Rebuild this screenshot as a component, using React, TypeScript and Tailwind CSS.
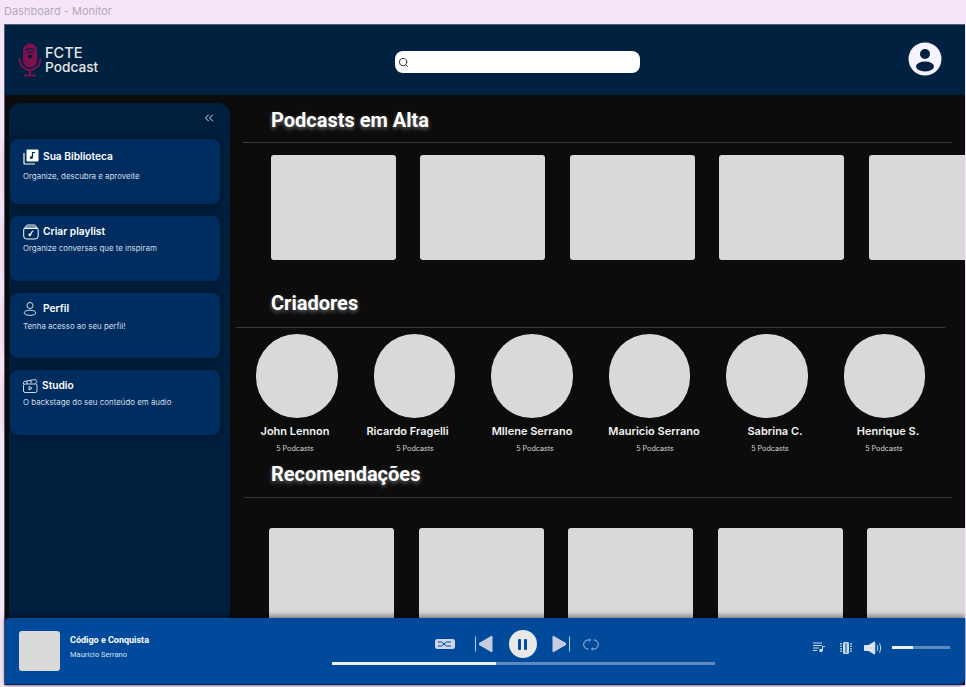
import { ChevronsLeft, Search } from "lucide-react";

const creators = [
  { name: "John Lennon", nameW: "w-[118px]", subW: "w-[118px]" },
  { name: "Ricardo Fragelli", nameW: "w-[107px]", subW: "w-[122px]" },
  { name: "MIlene Serrano", nameW: "w-[142px]", subW: "w-[118px]" },
  { name: "Mauricio Serrano", nameW: "w-[102px]", subW: "w-[122px]" },
  { name: "Sabrina C.", nameW: "w-[140px]", subW: "w-[108px]" },
  { name: "Henrique S.", nameW: "w-[86px]", subW: "w-[120px]" },
];

function MicLogo() {
  return (
    <svg width="24" height="34" viewBox="0 0 24 34" fill="none">
      <rect x="5" y="0.5" width="14" height="24" rx="7" fill="#7d1150" />
      <path d="M1.5 15.5c0 6.5 4.5 11.5 10.5 11.5s10.5-5 10.5-11.5" stroke="#7d1150" strokeWidth="2" />
      <path d="M12 27v5M6 32.5h12" stroke="#7d1150" strokeWidth="2" />
      <path d="M7.5 7.5c2.5-2.5 6.500-2.500 9 0M9.300 10.200c1.500-1.400 3.900-1.400 5.400 0" stroke="#001f3f" strokeWidth="1.200" />
      <circle cx="12" cy="13.500" r="2" fill="#001f3f" />
    </svg>
  );
}

function LibraryIcon() {
  return (
    <svg width="16" height="16" viewBox="0 0 16 16" fill="none">
      <path d="M1 4v10.500a.5.5 0 0 0 .5.5H12" stroke="white" strokeWidth="1.200" />
      <rect x="3.500" y="0.500" width="12" height="12" rx="1" fill="white" />
      <path d="M9.500 8.500V3.500h2.500" stroke="#002d5f" strokeWidth="1.200" />
      <circle cx="8.300" cy="8.600" r="1.500" fill="#002d5f" />
    </svg>
  );
}

function PlaylistIcon() {
  return (
    <svg width="16" height="16" viewBox="0 0 16 16" fill="none" stroke="white" strokeWidth="1">
      <rect x="0.700" y="3" width="14.500" height="12" rx="3" />
      <path d="M3 3c0-1 .5-2 1.500-2h7c1 0 1.500 1 1.500 2" />
      <path d="M2 4.500h12" />
      <path d="M9.500 7 7.500 10.500" strokeWidth="1.200" />
      <circle cx="6.800" cy="10.800" r="1" fill="white" />
      <path d="M9.500 7h1" strokeWidth="1.200" />
    </svg>
  );
}

function ProfileIcon() {
  return (
    <svg width="14" height="14" viewBox="0 0 14 14" fill="none" stroke="#e8eef6" strokeWidth="0.900">
      <circle cx="7" cy="3.500" r="3" />
      <ellipse cx="7" cy="10.800" rx="5.800" ry="2.600" />
    </svg>
  );
}

function StudioIcon() {
  return (
    <svg width="15" height="14" viewBox="0 0 15 14" fill="none" stroke="#e8eef6" strokeWidth="0.900">
      <rect x="0.500" y="5" width="13.500" height="8.500" rx="1.500" />
      <path d="M.5 5V3.500a1 1 0 0 1 .800-1l9.500-1.800c1.500-.3 3 .5 3 2 0 1-.800 1.500-1.800 1.800" />
      <path d="M4 2v3M8 1.200v3" />
      <path d="M6 7.500v3.500l3-1.700z" />
    </svg>
  );
}

function SidebarCard({
  icon,
  title,
  text,
  gap,
  top,
  descTop,
}: {
  icon: React.ReactNode;
  title: string;
  text: string;
  gap: string;
  top: string;
  descTop: string;
}) {
  return (
    <div className={`ml-px h-[65px] w-[210px] rounded-lg bg-[#002d5f] pl-[13px] shadow-[0_0_8px_4px_rgba(0,0,0,0.18)] ${top}`}>
      <div className={`flex h-4 items-center ${gap}`}>
        {icon}
        <span className="text-[10.200px] font-semibold text-white">{title}</span>
      </div>
      <p className={`text-[7.900px] leading-3 text-[#d3deea] ${descTop}`}>{text}</p>
    </div>
  );
}

function SectionTitle({ children }: { children: React.ReactNode }) {
  return (
    <h2 className="ml-[41px] h-[26px] font-['Roboto',sans-serif] text-[20px] leading-[26px] font-bold text-white [text-shadow:0_2px_4px_rgba(255,255,255,0.4)]">
      {children}
    </h2>
  );
}

function CoverRow({ className }: { className: string }) {
  return (
    <div className={`flex gap-[24.500px] ${className}`}>
      {[0, 1, 2, 3, 4].map((i) => (
        <div key={i} className="h-[105px] w-[125px] shrink-0 rounded-[3px] bg-[#d9d9d9]" />
      ))}
    </div>
  );
}

export default function App() {
  return (
    <div className="flex h-[687px] w-[966px] flex-col overflow-hidden bg-[#f5e6f7] font-['Inter',sans-serif]">
      <div className="h-6 pl-1 pt-[3px] text-[11px] leading-4 text-[#b5a9ba]">Dashboard - Monitor</div>

      <div className="ml-1 flex h-[661px] w-[961px] flex-col border-t border-l border-[#565b78] bg-[#0c0c0c]">
        <header className="flex h-[70px] shrink-0 items-center bg-[#002140]">
          <div className="ml-[13px] flex items-center gap-[3px] pb-px">
            <MicLogo />
            <div className="mt-px text-[#e6e6e6]">
              <div className="text-[14.500px] leading-[14px] font-medium">FCTE</div>
              <div className="text-[13.700px] leading-[14px] font-medium">Podcast</div>
            </div>
          </div>
          <div className="mt-1 ml-[297px] flex h-[22px] w-[245px] items-center rounded-lg bg-white pl-[3px]">
            <Search size={11} strokeWidth={2} className="text-[#2a2a3a]" />
          </div>
          <svg width="34" height="34" viewBox="0 0 34 34" className="mb-[2px] ml-[268px]">
            <circle cx="17" cy="17" r="16.500" fill="#f6f3ff" />
            <circle cx="17" cy="12" r="5" fill="#002140" />
            <ellipse cx="17" cy="24.500" rx="9" ry="5" fill="#002140" />
          </svg>
        </header>

        <div className="flex min-h-0 flex-1">
          <aside className="mt-2 ml-1 flex w-[221px] shrink-0 flex-col gap-3 rounded-t-xl bg-[#001f3f]">
            <div className="flex h-6 items-end justify-end pr-[14px]">
              <ChevronsLeft size={14} strokeWidth={1.500} className="mb-[2px] text-white" />
            </div>
            <SidebarCard
              icon={<LibraryIcon />}
              title="Sua Biblioteca"
              text="Organize, descubra e aproveite"
              gap="gap-1"
              top="pt-[10px]"
              descTop="mt-[5px]"
            />
            <SidebarCard
              icon={<PlaylistIcon />}
              title="Criar playlist"
              text="Organize conversas que te inspiram"
              gap="gap-1"
              top="pt-2"
              descTop="mt-[2px]"
            />
            <SidebarCard
              icon={<ProfileIcon />}
              title="Perfil"
              text="Tenha acesso ao seu perfil!"
              gap="gap-[6px]"
              top="pt-2"
              descTop="mt-[3px]"
            />
            <SidebarCard
              icon={<StudioIcon />}
              title="Studio"
              text="O backstage do seu conteúdo em áudio"
              gap="gap-1"
              top="pt-2"
              descTop="mt-[2px]"
            />
          </aside>

          <main className="min-w-0 flex-1 overflow-hidden pt-3">
            <SectionTitle>Podcasts em Alta</SectionTitle>
            <div className="mt-[9px] ml-[13px] h-px w-[709px] bg-[#3a3a3a]" />
            <CoverRow className="mt-3 ml-[40.750px]" />

            <div className="mt-[30px]">
              <SectionTitle>Criadores</SectionTitle>
            </div>
            <div className="mt-[11px] ml-[6px] h-px w-[709px] bg-[#3a3a3a]" />
            <div className="mt-[6px] ml-[26px] flex gap-[36px]">
              {creators.map((c) => (
                <div key={c.name} className="h-[84px] w-[81.500px] shrink-0 rounded-full bg-[#d9d9d9]" />
              ))}
            </div>
            <div className="mt-[5px] ml-[6px] flex">
              {creators.map((c) => (
                <div
                  key={c.name}
                  className={`${c.nameW} h-4 shrink-0 text-center text-[11px] leading-4 font-semibold whitespace-nowrap text-[#f2f2f2]`}
                >
                  {c.name}
                </div>
              ))}
            </div>
            <div className="mt-[5px] ml-[6px] flex">
              {creators.map((c) => (
                <div key={c.name} className={`${c.subW} h-[10px] shrink-0 text-center text-[7.200px] leading-[10px] text-[#d4d4d4]`}>
                  5 Podcasts
                </div>
              ))}
            </div>

            <div className="mt-[7px]">
              <SectionTitle>Recomendações</SectionTitle>
            </div>
            <div className="mt-[10px] ml-[14px] h-px w-[708px] bg-[#333333]" />
            <CoverRow className="mt-[30px] ml-[39px]" />
          </main>
        </div>

        <footer className="relative flex h-[67px] shrink-0 items-center rounded-tl-sm rounded-br-md border-b border-[#00264f] bg-[#00499b] shadow-[0_-3px_5px_rgba(0,0,0,0.35),0_1px_3px_rgba(60,30,70,0.5)]">
          <div className="ml-[14px] h-10 w-[41px] shrink-0 rounded-[3px] bg-[#d9d9d9]" />
          <div className="mb-2 ml-[10px] w-[262px] shrink-0 font-['Roboto',sans-serif]">
            <div className="text-[9px] leading-3 font-bold text-white">Código e Conquista</div>
            <div className="mt-[3px] text-[7.500px] leading-3 text-[#d8e2f0]">Maurício Serrano</div>
          </div>

          <div className="mt-3 flex w-[383px] shrink-0 flex-col items-center self-start">
            <div className="mr-[14px] flex items-center">
              <svg width="20" height="10" viewBox="0 0 20 10" className="mr-5" fill="none">
                <rect width="20" height="10" rx="2.500" fill="#cdd6e6" />
                <path d="M3 3h3.500l5 4H16M3 7h3.500l5-4H16" stroke="#00499b" strokeWidth="1" />
              </svg>
              <svg width="18" height="18" viewBox="0 0 18 18" className="mr-4">
                <path d="M0.500 1.500v15" stroke="#c5cce0" strokeWidth="1" />
                <path d="M17.500 1.800v14.400c0 .8-.7 1.200-1.400.8L4.500 10.200c-.8-.5-.8-1.900 0-2.400L16.100 1c.7-.4 1.400 0 1.400.8z" fill="#c5cce0" />
              </svg>
              <div className="flex h-7 w-7 items-center justify-center gap-[3px] rounded-full bg-[#e8e8e8]">
                <span className="h-[11px] w-[3px] rounded-[1px] bg-[#00499b]" />
                <span className="h-[11px] w-[3px] rounded-[1px] bg-[#00499b]" />
              </div>
              <svg width="18" height="18" viewBox="0 0 18 18" className="ml-[15px]">
                <path d="M17.500 1.500v15" stroke="#c5cce0" strokeWidth="1" />
                <path d="M.5 1.800v14.400c0 .8.7 1.200 1.400.8l11.600-6.800c.8-.5.8-1.900 0-2.400L1.900 1C1.200.6.5 1 .5 1.800z" fill="#c5cce0" />
              </svg>
              <svg width="16" height="13" viewBox="0 0 16 13" fill="none" className="ml-[13px]" stroke="#c5d3e8" strokeWidth="0.900">
                <path d="M6 2H5C2.500 2 .7 4 .7 6.500S2.500 11 5 11h.5" />
                <path d="M10 11h1c2.500 0 4.300-2 4.300-4.500S13.500 2 11 2h-.5" />
                <path d="M6 .7 7.500 2 6 3.300M10 9.700 8.500 11l1.500 1.300" />
              </svg>
            </div>
            <div className="mt-1 flex h-[3px] w-full bg-[#5f8ac0]">
              <div className="h-full w-[164px] bg-[#eef1f6]" />
            </div>
          </div>

          <div className="mb-[7px] ml-[98px] flex items-center">
            <svg width="13" height="11" viewBox="0 0 13 11" fill="none" stroke="#cfdcee" strokeWidth="1">
              <path d="M0 1h9M0 3.500h9M0 6h6M0 8.500h4" />
              <circle cx="8" cy="8.500" r="1.800" fill="#cfdcee" stroke="none" />
              <path d="M9.500 8.500V4.500h2.500" />
            </svg>
            <svg width="12" height="14" viewBox="0 0 12 14" className="ml-[14px]" fill="none" stroke="#cfdcee">
              <rect x="3" y="1" width="6" height="12" rx="1.500" fill="#cfdcee" stroke="none" />
              <path d="M6 2v10" stroke="#00499b" strokeWidth="1" />
              <path d="M1 2v10M11 2v10" strokeWidth="1.500" strokeDasharray="1.500 1" />
            </svg>
            <svg width="19" height="14" viewBox="0 0 19 14" className="ml-[12px]" fill="none">
              <path d="M0 5a1 1 0 0 1 1-1h3.500L10 .7c.6-.3 1.200 0 1.200.7v11.200c0 .7-.6 1-1.200.7L4.500 10H1a1 1 0 0 1-1-1z" fill="#dbe3ef" />
              <path d="M13 4c1 2 1 4 0 6M15.500 2.500c1.500 3 1.500 6 0 9" stroke="#cfdcee" strokeWidth="1" />
            </svg>
            <div className="ml-[9px] h-[3px] w-[58px] bg-[#5f8ac0]">
              <div className="h-full w-[21px] bg-[#eef1f6]" />
            </div>
          </div>
        </footer>
      </div>
    </div>
  );
}
